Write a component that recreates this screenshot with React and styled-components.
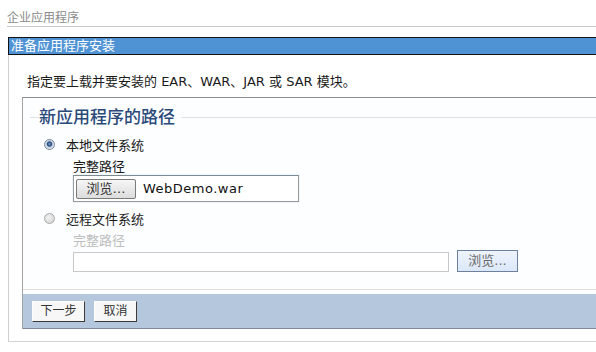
import React from 'react';
import styled, { createGlobalStyle } from 'styled-components';

const GlobalStyle = createGlobalStyle`
  body {
    margin: 0;
    background: #ffffff;
    font-family: "DejaVu Sans", "Noto Sans CJK SC", sans-serif;
    color: #1a1a1a;
  }
`;

const Page = styled.div`
  width: 596px;
  height: 352px;
  overflow: hidden;
`;

const Crumb = styled.div`
  margin-left: 7px;
  padding-top: 10px;
  height: 16px;
  line-height: 16px;
  font-size: 12px;
  color: #8a8a8a;
  border-bottom: 1px solid #c9c9c9;
`;

const Panel = styled.div`
  margin: 10px 0 0 8px;
`;

const TitleBar = styled.div`
  height: 16px;
  line-height: 16px;
  border: 1px solid #111;
  border-right: none;
  background: #5093d4;
  color: #fff;
  font-size: 13px;
  padding-left: 2px;
`;

const PanelBody = styled.div`
  border-left: 1px solid #cfcfcf;
  border-bottom: 1px solid #d4d4d4;
  padding: 19px 0 12px 0;
`;

const Intro = styled.div`
  padding-left: 18px;
  font-size: 13px;
  line-height: 16px;
`;

const Inner = styled.div`
  margin: 7px 0 0 13px;
  border-top: 1px solid #8e8e8e;
  border-left: 1px solid #a4a4a4;
  background: #fcfeff;
`;

const Fieldset = styled.div`
  padding-top: 9px;
  border-bottom: 1px solid #e6e0dc;
  margin-bottom: 4px;
`;

const LegendRow = styled.div`
  display: flex;
  align-items: center;
  height: 20px;

  &::before {
    content: '';
    width: 9px;
    margin-left: 7px;
    border-top: 1px solid #e2e2e2;
  }

  &::after {
    content: '';
    flex: 1;
    border-top: 1px solid #e2e2e2;
  }
`;

const Legend = styled.span`
  font-size: 17px;
  line-height: 20px;
  font-weight: 500;
  color: #2b4a7a;
  padding-right: 6px;
`;

const Section = styled.div`
  padding-left: 21px;
`;

const RadioRow = styled.div`
  display: flex;
  align-items: center;
  height: 16px;
  margin-top: ${(p) => p.$top}px;
  font-size: 13px;
`;

const Radio = styled.span`
  width: 9px;
  height: 9px;
  border-radius: 50%;
  border: 1px solid ${(p) => (p.$checked ? '#7a8694' : '#a8a8a8')};
  background: ${(p) =>
    p.$checked
      ? 'radial-gradient(circle at 50% 45%, #7fa0c8 0, #24497c 2.2px, #c9d6e6 3.2px, #f4f7fb 100%)'
      : 'radial-gradient(circle at 40% 40%, #f2f2f2 0, #cfcfcf 100%)'};
  margin-right: 11px;
`;

const FieldLabel = styled.div`
  padding-left: 29px;
  margin-top: ${(p) => p.$top}px;
  height: 16px;
  line-height: 16px;
  font-size: 13px;
  color: ${(p) => (p.$disabled ? '#bdbdbd' : '#1a1a1a')};
`;

const FileBox = styled.div`
  margin-left: 29px;
  width: 222px;
  height: 23px;
  border: 1px solid #9a9a9a;
  border-top-color: #7d8a8f;
  box-shadow: 0 0 0 1px #eef6fc;
  padding: 1px;
  display: flex;
  align-items: center;
  background: #fff;
`;

const GreyButton = styled.span`
  width: 58px;
  height: 18px;
  border: 1px solid #7a7a7a;
  border-radius: 2px;
  background: linear-gradient(#f6f6f6, #dcdcdc);
  font-size: 13px;
  line-height: 18px;
  text-align: center;
  color: #333;
  margin-left: 1px;
`;

const FileName = styled.span`
  margin-left: 7px;
  font-size: 13px;
  letter-spacing: 0.5px;
  color: #111;
`;

const InputRow = styled.div`
  display: flex;
  align-items: flex-end;
  gap: 8px;
  margin: 1px 0 0 29px;
  padding-bottom: 17px;
`;

const TextInput = styled.div`
  width: 374px;
  height: 18px;
  border: 1px solid #c8c8c8;
  background: #fff;
`;

const BlueButton = styled.span`
  width: 59px;
  height: 20px;
  border: 1px solid #6d819e;
  background: linear-gradient(#eef4fd, #dbe7f8);
  font-size: 13px;
  line-height: 20px;
  text-align: center;
  color: #6a6a6a;
`;

const ButtonBar = styled.div`
  display: flex;
  gap: 9px;
  padding: 7px 0 6px 9px;
  background: #b5c7dd;
  border-bottom: 1px solid #7f8aa0;
`;

const BarButton = styled.span`
  width: ${(p) => p.$w}px;
  height: 19px;
  line-height: 19px;
  text-align: center;
  font-size: 12px;
  color: #333;
  background: #f7f7f7;
  border: 1px solid #fefefe;
  border-right-color: #3a3a3a;
  border-bottom-color: #3a3a3a;
`;

export default function App() {
  return (
    <Page>
      <GlobalStyle />
      <Crumb>企业应用程序</Crumb>
      <Panel>
        <TitleBar>准备应用程序安装</TitleBar>
        <PanelBody>
          <Intro>指定要上载并要安装的 EAR、WAR、JAR 或 SAR 模块。</Intro>
          <Inner>
            <Fieldset>
              <LegendRow>
                <Legend>新应用程序的路径</Legend>
              </LegendRow>
              <Section>
                <RadioRow $top={9}>
                  <Radio $checked />
                  本地文件系统
                </RadioRow>
                <FieldLabel $top={7}>完整路径</FieldLabel>
                <FileBox>
                  <GreyButton>浏览…</GreyButton>
                  <FileName>WebDemo.war</FileName>
                </FileBox>
                <RadioRow $top={8}>
                  <Radio />
                  远程文件系统
                </RadioRow>
                <FieldLabel $top={7} $disabled>完整路径</FieldLabel>
                <InputRow>
                  <TextInput />
                  <BlueButton>浏览...</BlueButton>
                </InputRow>
              </Section>
            </Fieldset>
            <ButtonBar>
              <BarButton $w={51}>下一步</BarButton>
              <BarButton $w={41}>取消</BarButton>
            </ButtonBar>
          </Inner>
        </PanelBody>
      </Panel>
    </Page>
  );
}
